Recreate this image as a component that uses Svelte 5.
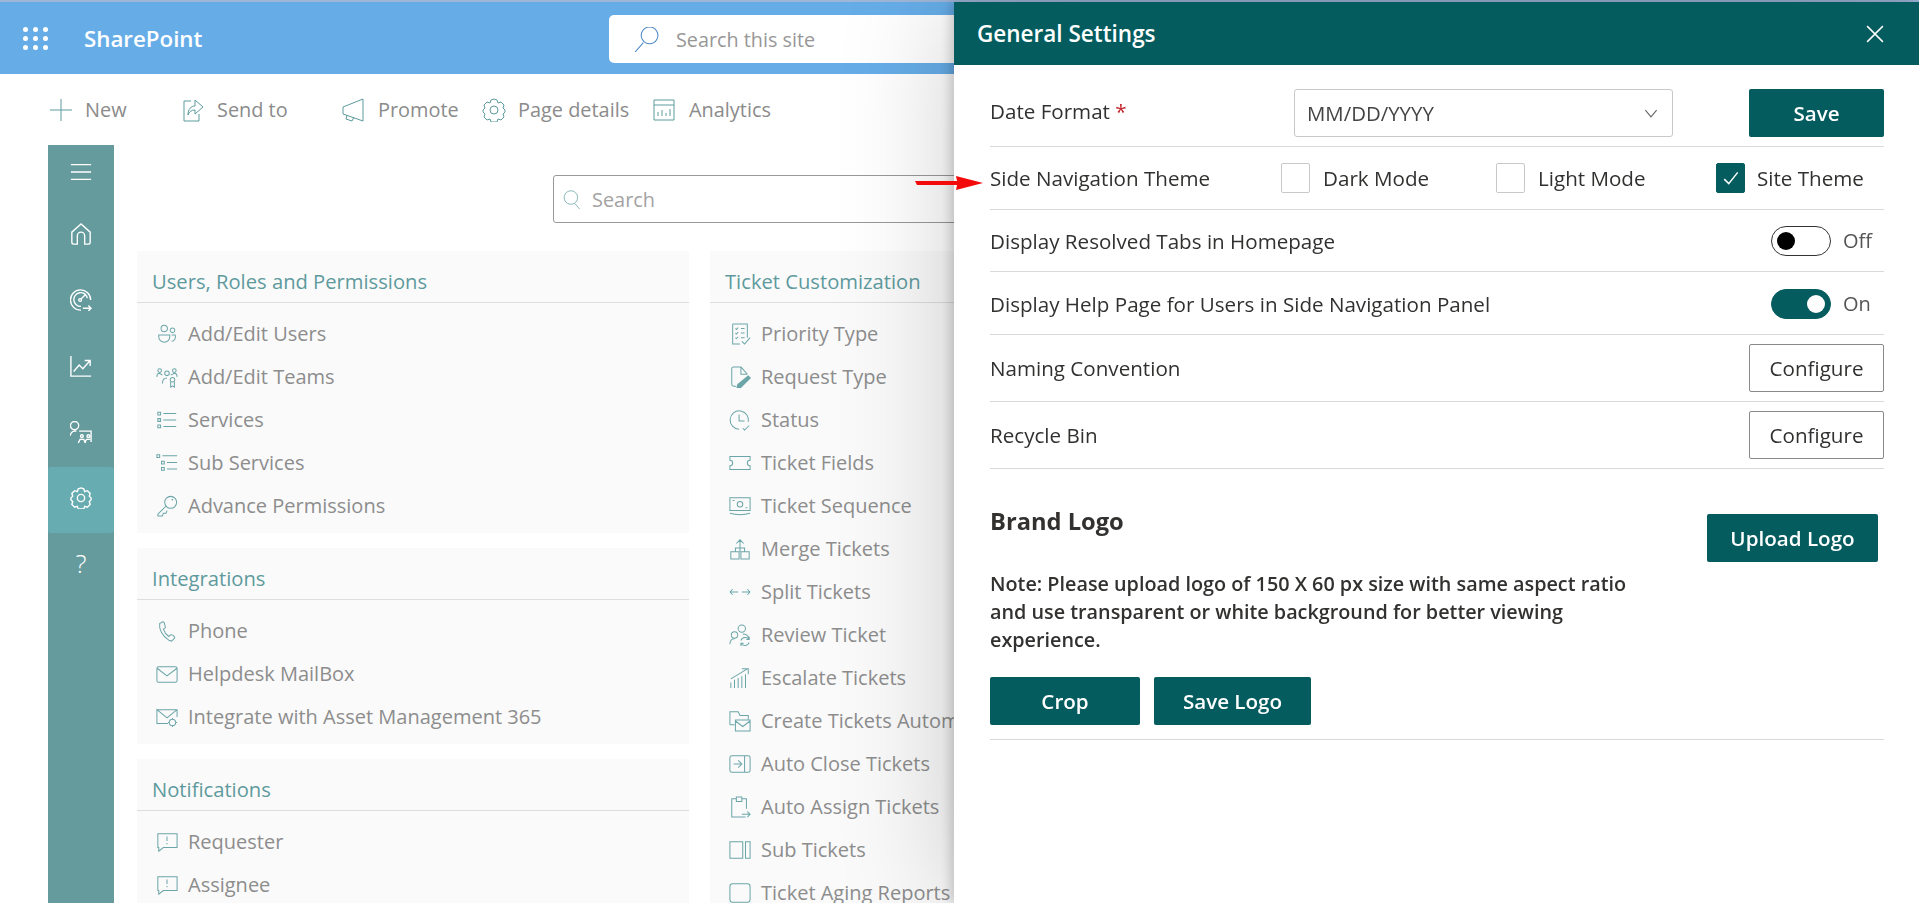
<script>
  let resolvedTabs = $state(false);
  let helpPage = $state(true);
  let theme = $state('site');

  // circle as a subpath, so every icon stays one d string
  const o = (x, y, r) => `M${x - r} ${y}a${r} ${r} 0 1 0 ${2 * r} 0a${r} ${r} 0 1 0 ${-2 * r} 0`;

  const icons = {
    users: o(9, 6, 3.5) + o(18, 8, 2.5) + 'M3 13h12v2a6 6 0 0 1-12 0zM17 13h4c1 3-1 7-4 7',
    teams: o(4, 5, 2) + o(12, 8, 2.5) + o(20, 5, 2) + o(18, 15, 2.5) + 'M1 12c0-3 2-4 3-4l3 2M23 12c0-2-1-4-3-4l-4 2M7 19c0-4 2-6 5-6M16 17v6l2-1 2 1v-6',
    list: 'M2 3.5h3v3H2zM2 10.500h3v3H2zM2 17.500h3v3H2zM8 5h14M8 12h14M8 19h14',
    sub: 'M1 3h3v3H1zM6 10h3v3H6zM6 17h3v3H6zM7 4h16M12 11.5h11M12 18.5h11',
    key: o(16, 8, 6.5) + 'M11 12L2 21v2h5l1-3h3l1-3M17 5h1v1',
    phone: 'M7 2L4 4c-1 6 3 14 10 18l3 1 3-3c1-1 0-2-1-3l-2-1c-1 0-2 0-3 2-3-2-5-5-6-8 2-1 3-2 2-3L9 3C8.5 2 8 2 7 2z',
    mail: 'M3 4h18a2 2 0 0 1 2 2v13a2 2 0 0 1-2 2H3a2 2 0 0 1-2-2V6a2 2 0 0 1 2-2zM1.5 6L12 14 22.500 6',
    mailcog: 'M1 4h22v8M13 19H1V4l11 9 11-9' + o(18, 18, 3.5) + 'M18 13v1.5M18 21.5V23M13 18h1.500M21.500 18H23',
    chat: 'M2 3h21v15H8l-5 4v-4H2zM12 6v5M12 13v1.500',
    priority: 'M4 1h16v15M12 23H4V1M7 6l1 1 2-2M13 6h4M7 11l1 1 2-2M13 11h4M7 16l1 1 2-2M13 16h4M14 20l3 3 6-7',
    request: 'M13 1H5a2 2 0 0 0-2 2v17a2 2 0 0 0 2 2h3M13 1l7 8M13 1v8h7',
    status: 'M21 14A10 10 0 1 0 11 22M11 6v7h6M15 21l2 2 5-5',
    ticket: 'M1 5h22v4a3 3 0 0 0 0 6v4H1v-4a3 3 0 0 0 0-6z',
    sequence: 'M1 3h22v14H1zM1 20c7 2 15 2 22 0' + o(12, 10, 3) + 'M4 6h2M18 14h2',
    merge: 'M2 15h9v8H2zM13 15h9v8h-9zM12 15V2M8 6l4-4 4 4M7 15v-4h10v4',
    split: 'M1 12h9M1 12l3-3M1 12l3 3M14 12h9M23 12l-3-3M23 12l-3 3',
    review: o(14, 5, 4) + o(6, 12, 3.5) + 'M1 22c0-4 2-6 5-6M15 11c3 0 6 2 7 5M13 18a5 5 0 0 1 9-1M22 20a5 5 0 0 1-9 1M22 14v3h-3M13 24v-3h3',
    escalate: 'M2 23v-6M6 23v-9M10 23v-11M14 23v-13M18 23V8M2 13L20 2M14 2h7v6',
    create: 'M1 16V2h9l2 4h9v4M1 16h5M7 11h16v12H7zM7 12l8 6 8-6',
    close: 'M3 3h18a2 2 0 0 1 2 2v14a2 2 0 0 1-2 2H3a2 2 0 0 1-2-2V5a2 2 0 0 1 2-2zM17 3v18M5 12h8M10 8l4 4-4 4',
    assign: 'M8 3H3v20h15M14 3h5v11M8 1h6v5H8zM14 20h9M20 17l3 3-3 3',
    subtickets: 'M1 3h14v18H1zM18 3h5v18h-5z',
    aging: 'M4 2h16a3 3 0 0 1 3 3v14a3 3 0 0 1-3 3H4a3 3 0 0 1-3-3V5a3 3 0 0 1 3-3z'
  };

  // filled parts drawn on top of the outline
  const solids = {
    request: 'M21 10l3 3-11 11-5 1 1-5z'
  };

  const navIcons = [
    'M1 4h22M1 12h22M1 20h22',
    'M12 1L2 10v11a2 2 0 0 0 2 2h4v-9a4 4 0 0 1 8 0v9h4a2 2 0 0 0 2-2V10z',
    'M22.500 12A11 11 0 1 0 12 23M19 10A7.500 7.500 0 1 0 12 19M12 11l5-5' + o(11, 12, 1.5) + 'M14 21h9M20 18l3 3-3 3',
    'M1 1v22h22M4 18l6-7 4 4 8-9M16 6h6v6',
    o(5, 5, 4.5) + 'M0 16c1-3 3-5 5-5h2M10 11h13v12M9 24l2-4h4l2 4M16 24l2-4h4' + o(13, 16.5, 1.5) + o(20, 16.5, 1.5),
    'M12 1l3 1 1 3 3-1 3 3-1 3 2 2v2l-2 2 1 3-3 3-3-1-1 3h-6l-1-3-3 1-3-3 1-3-2-2v-2l2-2-1-3 3-3 3 1 1-3z' + o(12, 12, 4)
  ];

  const col1 = [
    { title: 'Users, Roles and Permissions', items: [
      ['users', 'Add/Edit Users'], ['teams', 'Add/Edit Teams'], ['list', 'Services'],
      ['sub', 'Sub Services'], ['key', 'Advance Permissions']
    ] },
    { title: 'Integrations', items: [
      ['phone', 'Phone'], ['mail', 'Helpdesk MailBox'], ['mailcog', 'Integrate with Asset Management 365']
    ] },
    { title: 'Notifications', items: [['chat', 'Requester'], ['chat', 'Assignee']] }
  ];

  const col2 = {
    title: 'Ticket Customization',
    items: [
      ['priority', 'Priority Type'], ['request', 'Request Type'], ['status', 'Status'],
      ['ticket', 'Ticket Fields'], ['sequence', 'Ticket Sequence'], ['merge', 'Merge Tickets'],
      ['split', 'Split Tickets'], ['review', 'Review Ticket'], ['escalate', 'Escalate Tickets'],
      ['create', 'Create Tickets Automatically'], ['close', 'Auto Close Tickets'],
      ['assign', 'Auto Assign Tickets'], ['subtickets', 'Sub Tickets'], ['aging', 'Ticket Aging Reports']
    ]
  };

  const themes = [
    { id: 'dark', label: 'Dark Mode' },
    { id: 'light', label: 'Light Mode' },
    { id: 'site', label: 'Site Theme' }
  ];
</script>

{#snippet icon(d, cls = '', solid = '')}
  <svg class="icon {cls}" viewBox="0 0 24 24" fill="none" stroke="currentColor" aria-hidden="true">
    <path {d} />
    {#if solid}<path d={solid} fill="currentColor" stroke="none" />{/if}
  </svg>
{/snippet}

{#snippet card(group)}
  <section class="card">
    <h3>{group.title}</h3>
    <ul>
      {#each group.items as [name, label]}
        <li>{@render icon(icons[name], 'item-icon', solids[name])}<span>{label}</span></li>
      {/each}
    </ul>
  </section>
{/snippet}

<div class="page">
  <header class="suite">
    <div class="waffle">
      {#each Array(9) as _}<i></i>{/each}
    </div>
    <span class="brand">SharePoint</span>
    <div class="site-search">
      <svg class="search-glyph" viewBox="0 0 24 24" fill="none" stroke="currentColor"><path d="M9 15L1 24M15 0a8 8 0 1 1-.1 0z" /></svg>
      <span>Search this site</span>
    </div>
  </header>

  <nav class="commands">
    <span class="cmd new">{@render icon('M12 1v22M1 12h22')}New</span>
    <span class="cmd send">{@render icon('M10 3H3v20h15v-7M14 2l8 7-8 7v-4c-4 0-6 2-7 5 0-6 3-9 7-9z')}Send to</span>
    <span class="cmd promote">{@render icon('M22 1L2 9v7l20 7zM6 17l-1 4 6 2 2-4')}Promote</span>
    <span class="cmd details">{@render icon(navIcons[5])}Page details</span>
    <span class="cmd">{@render icon('M2 2h20v20H2zM2 7h20M6 18v-4M10 18v-6M14 18v-3M18 18v-7')}Analytics</span>
  </nav>

  <div class="body">
    <aside class="sidenav">
      {#each navIcons as d, i}
        <div class="nav-item" class:active={i === 5}>{@render icon(d, 'nav-icon')}</div>
      {/each}
      <div class="nav-item help">?</div>
    </aside>

    <main class="content">
      <div class="find">
        <svg class="find-glyph" viewBox="0 0 24 24" fill="none" stroke="currentColor"><path d="M10 1a8.5 8.5 0 1 1-.1 0zM15 17l6 7" /></svg>
        <span>Search</span>
      </div>
      <div class="columns">
        <div class="col">
          {#each col1 as group}
            {@render card(group)}
          {/each}
        </div>
        <div class="col">
          {@render card(col2)}
        </div>
      </div>
    </main>
  </div>
</div>

<aside class="panel">
  <header class="panel-head">
    <h2>General Settings</h2>
    <svg class="close" viewBox="0 0 16 16" stroke="currentColor" fill="none"><path d="M1 1l14 14M15 1L1 15" /></svg>
  </header>

  <div class="panel-body">
    <div class="row date">
      <span class="label">Date Format <em>*</em></span>
      <div class="select">
        <span>MM/DD/YYYY</span>
        <svg viewBox="0 0 12 8" fill="none" stroke="currentColor"><path d="M1 1l5 6 5-6" /></svg>
      </div>
      <button class="primary save">Save</button>
    </div>

    <div class="row theme">
      <span class="label">Side Navigation Theme</span>
      {#each themes as t}
        <button class="option {t.id}" onclick={() => (theme = t.id)}>
          <span class="box" class:checked={theme === t.id}>
            {#if theme === t.id}
              <svg viewBox="0 0 16 16" fill="none" stroke="#fff" stroke-width="1.3"><path d="M2 9l4 4 8-10" /></svg>
            {/if}
          </span>
          {t.label}
        </button>
      {/each}
    </div>

    <div class="row resolved">
      <span class="label">Display Resolved Tabs in Homepage</span>
      <button class="toggle" class:on={resolvedTabs} aria-label="toggle" onclick={() => (resolvedTabs = !resolvedTabs)}><i></i></button>
      <span class="state">{resolvedTabs ? 'On' : 'Off'}</span>
    </div>

    <div class="row help-row">
      <span class="label">Display Help Page for Users in Side Navigation Panel</span>
      <button class="toggle" class:on={helpPage} aria-label="toggle" onclick={() => (helpPage = !helpPage)}><i></i></button>
      <span class="state">{helpPage ? 'On' : 'Off'}</span>
    </div>

    <div class="row naming">
      <span class="label">Naming Convention</span>
      <button class="outline">Configure</button>
    </div>

    <div class="row bin">
      <span class="label">Recycle Bin</span>
      <button class="outline">Configure</button>
    </div>

    <div class="logo">
      <div class="logo-text">
        <h3>Brand Logo</h3>
        <p>Note: Please upload logo of 150 X 60 px size with same aspect ratio and use transparent or white background for better viewing experience.</p>
        <div class="logo-actions">
          <button class="primary crop">Crop</button>
          <button class="primary save-logo">Save Logo</button>
        </div>
      </div>
      <button class="primary upload">Upload Logo</button>
    </div>
  </div>
</aside>

<svg class="arrow" viewBox="0 0 68 14"><path d="M0 5h42L41 0l27 7-27 7 1-5H2z" fill="#f30a0a" /></svg>

<style>
  :global(body) {
    margin: 0;
    background: #fff;
    overflow: hidden;
    font-family: "Open Sans", "Noto Sans", sans-serif;
  }

  .page {
    height: 903px;
    overflow: hidden;
    border-top: 2px solid #9fb6d8;
    box-sizing: border-box;
  }

  .suite {
    height: 72px;
    background: #66ade8;
    display: flex;
    align-items: center;
    padding-left: 23px;
    color: #fff;
  }

  .waffle {
    display: grid;
    grid-template-columns: repeat(3, 5px);
    gap: 4px 5px;
    width: 25px;
  }

  .waffle i {
    width: 5px;
    height: 5px;
    border-radius: 50%;
    background: #fff;
  }

  .brand {
    margin-left: 36px;
    width: 525px;
    font-size: 22.3px;
    font-weight: 600;
  }

  .site-search {
    width: 500px;
    height: 48px;
    margin-top: 2px;
    background: #fff;
    border-radius: 5px;
    display: flex;
    align-items: center;
    padding-left: 25px;
    color: #979797;
    font-size: 19.8px;
  }

  .search-glyph {
    width: 25px;
    height: 25px;
    color: #4a86c5;
    margin-right: 17px;
    stroke-width: 1;
  }

  .commands {
    height: 71px;
    display: flex;
    align-items: center;
    padding-left: 49px;
    color: #8b8b8b;
    font-size: 19.9px;
  }

  .cmd {
    display: flex;
    align-items: center;
    gap: 13px;
  }

  .cmd .icon {
    width: 24px;
    height: 24px;
    color: #5d9b9d;
    stroke-width: 1;
  }

  .new { width: 132px; gap: 12px; }
  .send { width: 160px; gap: 12px; }
  .promote { width: 141px; }
  .details { width: 170px; gap: 12px; }

  .body {
    display: flex;
    height: 758px;
  }

  .sidenav {
    margin-left: 48px;
    width: 66px;
    background: #669b9e;
    color: #fff;
    display: flex;
    flex-direction: column;
  }

  .nav-item {
    height: 66px;
    display: flex;
    align-items: center;
    justify-content: center;
    flex: none;
  }

  .nav-item:first-child { height: 58px; }

  .nav-item.active {
    background: #67acb0;
    border-radius: 3px;
  }

  .nav-icon {
    width: 22px;
    height: 22px;
    margin-top: -5px;
    stroke-width: 1.5;
  }

  .help {
    font-size: 26px;
    font-weight: 300;
    padding-bottom: 6px;
    box-sizing: border-box;
  }

  .content {
    margin-left: 23px;
    width: 900px;
  }

  .find {
    width: 500px;
    height: 46px;
    margin: 30px 0 28px 416px;
    border: 1px solid #999;
    border-radius: 3px;
    display: flex;
    align-items: center;
    padding-left: 9px;
    color: #a3a3a3;
    font-size: 19.9px;
    gap: 10px;
  }

  .find-glyph {
    width: 19px;
    height: 19px;
    color: #6ba5a8;
  }

  .columns {
    display: flex;
    gap: 21px;
  }

  .col {
    display: flex;
    flex-direction: column;
    gap: 15px;
    width: 552px;
    flex: none;
  }

  .card {
    background: #fafafa;
    padding-bottom: 6px;
  }

  .card h3 {
    margin: 0;
    height: 51px;
    line-height: 61px;
    padding-left: 15px;
    border-bottom: 1px solid #dedede;
    font-size: 20.2px;
    font-weight: 500;
    color: #5e9a9d;
  }

  .card ul {
    list-style: none;
    margin: 0;
    padding: 9px 0 0 19px;
  }

  .card li {
    height: 43px;
    display: flex;
    align-items: center;
    gap: 10px;
    color: #8d8d8d;
    font-size: 20px;
    white-space: nowrap;
  }

  .item-icon {
    width: 22px;
    height: 22px;
    color: #6ba5a8;
    stroke-width: 1.1;
    flex: none;
  }

  .panel {
    position: fixed;
    top: 2px;
    right: 0;
    bottom: 0;
    width: 965px;
    background: #fff;
    box-shadow: -4px 0 10px rgba(0, 0, 0, 0.16), 0 0 110px rgba(0, 0, 0, 0.2);
    color: #323130;
  }

  .panel-head {
    height: 63px;
    background: #045c5f;
    color: #fff;
    display: flex;
    align-items: center;
    justify-content: space-between;
    padding: 0 35px 0 23px;
  }

  .panel-head h2 {
    margin: 0;
    font-size: 22.5px;
    font-weight: 600;
  }

  .close {
    width: 18px;
    height: 18px;
    stroke-width: 1.3;
  }

  .panel-body {
    margin: 0 35px 0 36px;
    font-size: 20.6px;
    font-weight: 500;
  }

  .row {
    display: flex;
    align-items: center;
    border-bottom: 1px solid #d9d9d9;
    box-sizing: border-box;
  }

  .date { height: 82px; padding-top: 15px; }
  .theme { height: 63px; }
  .resolved { height: 62px; }
  .help-row { height: 63px; padding-top: 1px; }
  .naming { height: 67px; }
  .bin { height: 67px; }

  .row .label { flex: none; }

  .date .label { width: 304px; margin-top: -4px; }
  .label em { color: #c4262e; font-style: normal; }

  .select {
    width: 379px;
    height: 48px;
    box-sizing: border-box;
    border: 1px solid #c8c8c8;
    border-radius: 3px;
    display: flex;
    align-items: center;
    justify-content: space-between;
    padding: 0 14px 0 12px;
    font-size: 20.4px;
    font-weight: 400;
    color: #444;
  }

  .select svg {
    width: 14px;
    height: 9px;
    color: #666;
  }

  button {
    font: inherit;
    cursor: pointer;
  }

  .primary {
    height: 48px;
    border: none;
    border-radius: 2px;
    background: #045c5f;
    color: #fff;
    font-weight: 600;
    padding: 0;
  }

  .save {
    width: 135px;
    margin-left: auto;
  }

  .outline {
    width: 135px;
    height: 48px;
    margin-left: auto;
    background: #fff;
    border: 1px solid #8a8a8a;
    border-radius: 2px;
    color: #323130;
    font-weight: 500;
    padding: 0;
  }

  .theme .label { width: 291px; }

  .option {
    display: flex;
    align-items: center;
    gap: 13px;
    background: none;
    border: none;
    padding: 0;
    color: inherit;
    font-weight: 500;
  }

  .option.dark { width: 215px; }
  .option.light { width: 220px; }
  .option.site { gap: 12px; }

  .box {
    width: 29px;
    height: 30px;
    box-sizing: border-box;
    border: 1px solid #c8c8c8;
    border-radius: 2px;
    display: flex;
    align-items: center;
    justify-content: center;
  }

  .box.checked {
    background: #045c5f;
    border-color: #045c5f;
  }

  .box svg { width: 18px; height: 18px; }

  .toggle {
    margin-left: auto;
    width: 60px;
    height: 30px;
    border: 1px solid #333;
    border-radius: 15px;
    background: #fff;
    padding: 0 5px;
    display: flex;
    align-items: center;
  }

  .toggle i {
    width: 18px;
    height: 18px;
    border-radius: 50%;
    background: #000;
  }

  .toggle.on {
    background: #045c5f;
    border-color: #045c5f;
    justify-content: flex-end;
  }

  .toggle.on i { background: #fff; }

  .state {
    width: 53px;
    padding-left: 12px;
    box-sizing: border-box;
    font-size: 20px;
    font-weight: 400;
    color: #555;
  }

  .logo {
    display: flex;
    justify-content: space-between;
    align-items: flex-start;
    border-bottom: 1px solid #d9d9d9;
    height: 271px;
    box-sizing: border-box;
    padding: 45px 6px 0 0;
  }

  .logo-text h3 {
    margin: -8px 0 34px;
    font-size: 23.7px;
    line-height: 30px;
    font-weight: 700;
    color: #323130;
  }

  .logo-text p {
    margin: 0 0 23px;
    width: 650px;
    font-size: 19.8px;
    line-height: 28px;
    font-weight: 600;
  }

  .logo-actions {
    display: flex;
    gap: 14px;
  }

  .crop { width: 150px; }
  .save-logo { width: 157px; }

  .upload { width: 171px; }

  .arrow {
    position: fixed;
    left: 915px;
    top: 176px;
    width: 68px;
    height: 14px;
  }
</style>
